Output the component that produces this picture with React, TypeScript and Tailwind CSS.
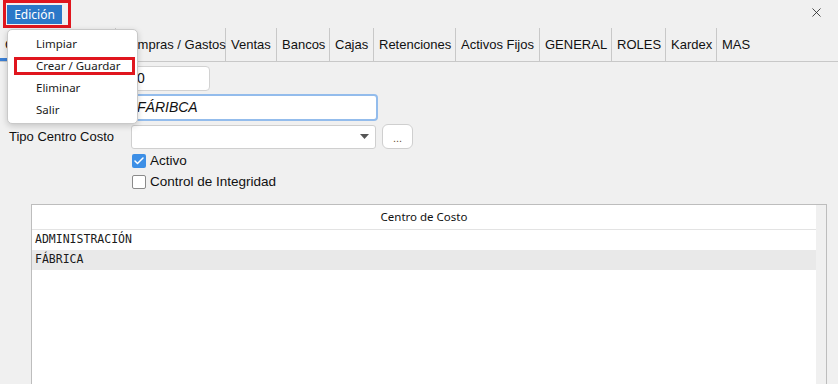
import { Check, X } from "lucide-react";

const tabs = [
  { label: "Contabilidad", width: "w-[116px]" },
  { label: "Compras / Gastos", width: "w-[110px]" },
  { label: "Ventas", width: "w-[51px]" },
  { label: "Bancos", width: "w-[53px]" },
  { label: "Cajas", width: "w-[44px]" },
  { label: "Retenciones", width: "w-[82px]" },
  { label: "Activos Fijos", width: "w-[84px]" },
  { label: "GENERAL", width: "w-[72px]" },
  { label: "ROLES", width: "w-[54px]" },
  { label: "Kardex", width: "w-[51px]" },
  { label: "MAS", width: "w-[40px]" },
];

const menuItems = ["Limpiar", "Crear / Guardar", "Eliminar", "Salir"];

const rows = ["ADMINISTRACIÓN", "FÁBRICA"];

const ui = "font-['Noto_Sans',sans-serif]";
const arial = "font-['Liberation_Sans',Arial,sans-serif]";

const EditMenu = () => (
  <div
    className={`absolute left-[7px] top-[29px] w-[131px] h-[95px] bg-white border border-[#c9c9c9] rounded-[5px] shadow-[0_2px_6px_rgba(0,0,0,0.18)] ${ui} text-[11.5px] text-[#1a1a1a] py-[3px]`}
  >
    {menuItems.map((item, i) => (
      <div key={item} className="h-[22px] flex items-center relative">
        {i === 1 && (
          <div className="absolute left-[6px] top-[2px] w-[121px] h-[18px] border-[3px] border-[#e0161e]" />
        )}
        <span className="pl-[28px]">{item}</span>
      </div>
    ))}
  </div>
);

const App = () => {
  return (
    <div className={`w-[838px] h-[384px] bg-[#f0f0f0] relative overflow-hidden ${arial}`}>
      {/* barra de menu */}
      <div className="h-[28px] flex items-start justify-between">
        <div className="ml-[3px] w-[68px] h-[28px] border-[3px] border-[#e0161e] flex items-start pl-[1px] pt-[2px]">
          <div className={`w-[55px] h-[19px] bg-[#2b78c8] text-white text-[12px] flex items-center justify-center ${ui}`}>
            Edición
          </div>
        </div>
        <button className="mr-[14px] mt-[5px] text-[#222]">
          <X size={15} strokeWidth={1.3} />
        </button>
      </div>

      {/* pestañas */}
      <div className="h-[34px] flex items-stretch border-b border-[#c8c8c8] text-[13px] text-[#111] whitespace-nowrap">
        {tabs.map((tab, i) => (
          <div
            key={tab.label}
            className={`${tab.width} shrink-0 flex items-center pl-[5px] ${
              i === tabs.length - 1 ? "" : "border-r border-[#c8c8c8]"
            } ${i === 0 ? "border-b-[3px] border-b-[#3b7fd4] pt-[3px]" : ""}`}
          >
            {tab.label}
          </div>
        ))}
      </div>

      {/* formulario */}
      <div className="pt-[3px] text-[13px] text-[#111]">
        <div className="flex items-center h-[27px]">
          <span className="w-[130px]" />
          <div className="w-[80px] h-[25px] bg-white border border-[#d2d2d2] rounded-[4px] flex items-center pl-[6px] text-[14px]">
            0
          </div>
        </div>
        <div className="flex items-center h-[28px] mt-[1px]">
          <span className="w-[130px]" />
          <div className="w-[248px] h-[27px] bg-white border-2 border-[#93bcec] rounded-[4px] flex items-center pl-[5px] italic text-[14px]">
            FÁRIBCA
          </div>
        </div>
        <div className="flex items-center h-[27px] mt-[2px]">
          <span className="w-[131px] pl-[9px]">Tipo Centro Costo</span>
          <div className="w-[245px] h-[24px] bg-white border border-[#cfcfcf] rounded-[3px] flex items-center justify-end pr-[6px]">
            <svg width="9" height="5" viewBox="0 0 9 5">
              <path d="M0 0h9L4.5 5z" fill="#555" />
            </svg>
          </div>
          <div className="ml-[6px] w-[31px] h-[25px] bg-white border border-[#cfcfcf] rounded-[6px] flex items-end justify-center pb-[4px] text-[11px] leading-none text-[#6b5230]">
            ...
          </div>
        </div>
        <div className="pl-[132px] mt-[4px] flex flex-col gap-[7px]">
          <label className="flex items-center gap-[4px] h-[14px]">
            <span className="w-[14px] h-[14px] rounded-[2px] bg-[#3d8fe6] flex items-center justify-center">
              <Check size={12} strokeWidth={3} color="white" />
            </span>
            <span className="text-[13.5px]">Activo</span>
          </label>
          <label className="flex items-center gap-[4px] h-[14px]">
            <span className="w-[14px] h-[14px] rounded-[2px] bg-white border border-[#8a8a8a]" />
            <span className="text-[13.5px]">Control de Integridad</span>
          </label>
        </div>
      </div>

      {/* tabla */}
      <div className="absolute left-[31px] top-[204px] w-[796px] h-[200px] bg-[#f0f0f0] border border-[#bdbdbd] flex">
        <div className="flex-1 bg-white flex flex-col">
          <div className={`h-[25px] border-b border-[#e3e3e3] flex items-center justify-center text-[11.5px] text-[#111] ${ui}`}>
            Centro de Costo
          </div>
          {rows.map((r, i) => (
            <div
              key={r}
              className={`h-[20px] flex items-center pl-[3px] font-['DejaVu_Sans_Mono',monospace] text-[11.5px] text-[#1a1a1a] ${
                i === 1 ? "bg-[#e9e9e9]" : ""
              }`}
            >
              {r}
            </div>
          ))}
        </div>
        <div className="w-[10px]" />
      </div>

      <EditMenu />
    </div>
  );
};

export default App;
